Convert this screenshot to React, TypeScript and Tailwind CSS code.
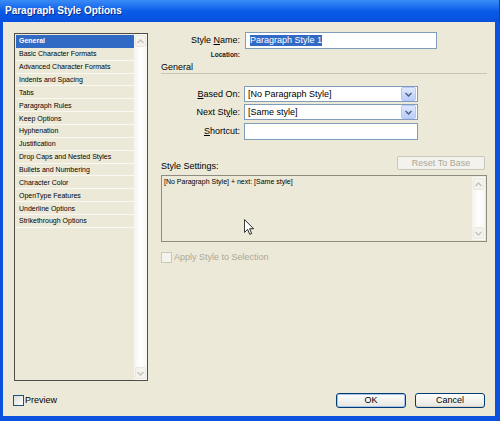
const FONT = { fontFamily: '"Liberation Sans", Arial, sans-serif' };

const SECTIONS = [
  'General',
  'Basic Character Formats',
  'Advanced Character Formats',
  'Indents and Spacing',
  'Tabs',
  'Paragraph Rules',
  'Keep Options',
  'Hyphenation',
  'Justification',
  'Drop Caps and Nested Styles',
  'Bullets and Numbering',
  'Character Color',
  'OpenType Features',
  'Underline Options',
  'Strikethrough Options',
];

function Chevron({ up = false, color = '#4d6185' }: { up?: boolean; color?: string }) {
  return (
    <svg width="7" height="5" viewBox="0 0 7 5" aria-hidden="true">
      <path
        d={up ? 'M0.5 4 L3.5 1 L6.5 4' : 'M0.5 1 L3.5 4 L6.5 1'}
        fill="none"
        stroke={color}
        strokeWidth="1.5"
      />
    </svg>
  );
}

function ScrollArrow({ up = false }: { up?: boolean }) {
  return (
    <div className="h-[12px] w-full flex items-center justify-center rounded-[2px] border border-[#e9e7dd] bg-[#f4f3ee]">
      <Chevron up={up} color="#c8c6bb" />
    </div>
  );
}

function ScrollBar() {
  return (
    <div className="w-[13px] h-full flex flex-col justify-between bg-gradient-to-r from-[#f4f3ee] via-white to-[#f7f6f1] px-px py-px">
      <ScrollArrow up />
      <ScrollArrow />
    </div>
  );
}

function Combo({ value }: { value: string }) {
  return (
    <div className="w-[174px] h-[16px] flex items-center border border-[#7f9db9] bg-white">
      <span className="flex-1 pl-[3px] text-[9px] text-black leading-none">{value}</span>
      <div className="w-[15px] h-[14px] mr-px flex items-center justify-center rounded-[2px] border border-[#b4c8f6] bg-gradient-to-b from-[#dfe8fe] to-[#b9cdf9]">
        <Chevron />
      </div>
    </div>
  );
}

function Label({ children }: { children: React.ReactNode }) {
  return <div className="w-[79px] text-right text-[9px] leading-none text-black">{children}</div>;
}

function XpButton({ label, primary = false }: { label: string; primary?: boolean }) {
  return (
    <button
      className={`w-[70px] h-[15px] rounded-[3px] border border-[#003c74] bg-gradient-to-b from-white to-[#e6e5de] text-[9px] leading-none text-black ${
        primary ? 'shadow-[inset_0_0_0_1px_#a9c3f0]' : 'shadow-[inset_0_-1px_0_#d6d0c5]'
      }`}
    >
      {label}
    </button>
  );
}

function Cursor() {
  return (
    <svg width="10" height="16" viewBox="0 0 12 19" className="absolute left-[82px] top-[43px]" aria-hidden="true">
      <path d="M0.5 0.5 L0.5 16 L4.3 12.4 L6.9 18.3 L9.2 17.3 L6.7 11.6 L11.5 11.6 Z" fill="white" stroke="black" strokeWidth="1" />
    </svg>
  );
}

export default function App() {
  return (
    <div className="w-[500px] h-[421px] flex flex-col bg-[#0d52df]" style={FONT}>
      {/* title bar */}
      <div className="h-[22px] flex items-center pl-[5px] bg-gradient-to-b from-[#3b8cf7] via-[#0a5ce9] to-[#0650dd] border-r border-[#0a3db8]">
        <span className="text-[10px] font-bold text-white leading-none [text-shadow:1px_1px_0_#0a2a8a]">
          Paragraph Style Options
        </span>
      </div>

      <div className="flex-1 ml-[3px] mr-[5px] mb-[5px] flex flex-col bg-[#ece9d8] pt-[11px]">
        <div className="h-[348px] flex pl-[11px]">
          {/* section list */}
          <div className="w-[134px] h-full flex border border-[#4f4e46] bg-[#ece9d8]">
            <div className="flex-1 pt-px pl-px">
              {SECTIONS.map((s, i) => (
                <div
                  key={s}
                  className={`h-[12.86px] flex items-center pl-[3px] text-[7px] leading-none border-b ${
                    i === 0
                      ? 'bg-[#316ac5] text-white font-bold border-[#316ac5]'
                      : 'text-black border-[#f9f8f3]'
                  }`}
                >
                  {s}
                </div>
              ))}
            </div>
            <ScrollBar />
          </div>

          {/* right panel */}
          <div className="w-[326px] ml-[13px] flex flex-col">
            <div className="-mt-px h-[17px] flex items-center gap-[5px]">
              <Label>
                Style <u>N</u>ame:
              </Label>
              <div className="w-[192px] h-[17px] flex items-center border border-[#7f9db9] bg-white pl-[4px]">
                <span className="text-[9px] leading-none text-white bg-[#316ac5] py-[1px]">Paragraph Style 1</span>
              </div>
            </div>

            <div className="mt-[2px] h-[8px] flex items-center">
              <div className="w-[79px] text-right text-[6.5px] font-bold leading-none text-[#222]">Location:</div>
            </div>

            <div className="mt-[3px] h-[12px] flex items-center text-[9px] leading-none text-black border-b border-[#c8c5b4]">
              General
            </div>

            <div className="mt-[12px] flex items-center gap-[4px]">
              <Label>
                <u>B</u>ased On:
              </Label>
              <Combo value="[No Paragraph Style]" />
            </div>
            <div className="mt-[2px] flex items-center gap-[4px]">
              <Label>
                Next St<u>y</u>le:
              </Label>
              <Combo value="[Same style]" />
            </div>
            <div className="mt-[3px] flex items-center gap-[4px]">
              <Label>
                <u>S</u>hortcut:
              </Label>
              <div className="w-[174px] h-[17px] border border-[#7f9db9] bg-white" />
            </div>

            <div className="mt-[16px] flex items-end justify-between pr-[2px]">
              <span className="text-[9px] leading-none text-black mb-[-1px]">Style Settings:</span>
              <button className="w-[88px] h-[14px] rounded-[2px] border border-[#c9c7ba] bg-[#f3f2ec] text-[9px] leading-none text-[#aca899]">
                Reset To Base
              </button>
            </div>

            <div className="relative mt-[5px] h-[67px] flex border border-[#8e8c80] bg-[#ece9d8]">
              <div className="flex-1 pl-[2px] pt-[2px] text-[7px] leading-none text-black">
                [No Paragraph Style] + next: [Same style]
              </div>
              <div className="py-px pr-px">
                <ScrollBar />
              </div>
              <Cursor />
            </div>

            <div className="mt-[10px] h-[11px] flex items-center gap-[2px]">
              <div className="w-[11px] h-[11px] border border-[#cac8bb] bg-[#f4f3ee]" />
              <span className="text-[9px] leading-none text-[#aca899]">Apply Style to Selection</span>
            </div>
          </div>
        </div>

        {/* bottom bar */}
        <div className="mt-[12px] h-[15px] flex items-center justify-between pl-[10px] pr-[10px]">
          <div className="flex items-center gap-[1px]">
            <div className="w-[11px] h-[11px] border border-[#1c5180] bg-gradient-to-br from-[#dcdcd6] to-white" />
            <span className="text-[9px] leading-none text-black">Preview</span>
          </div>
          <div className="flex gap-[9px]">
            <XpButton label="OK" primary />
            <XpButton label="Cancel" />
          </div>
        </div>
      </div>
    </div>
  );
}
